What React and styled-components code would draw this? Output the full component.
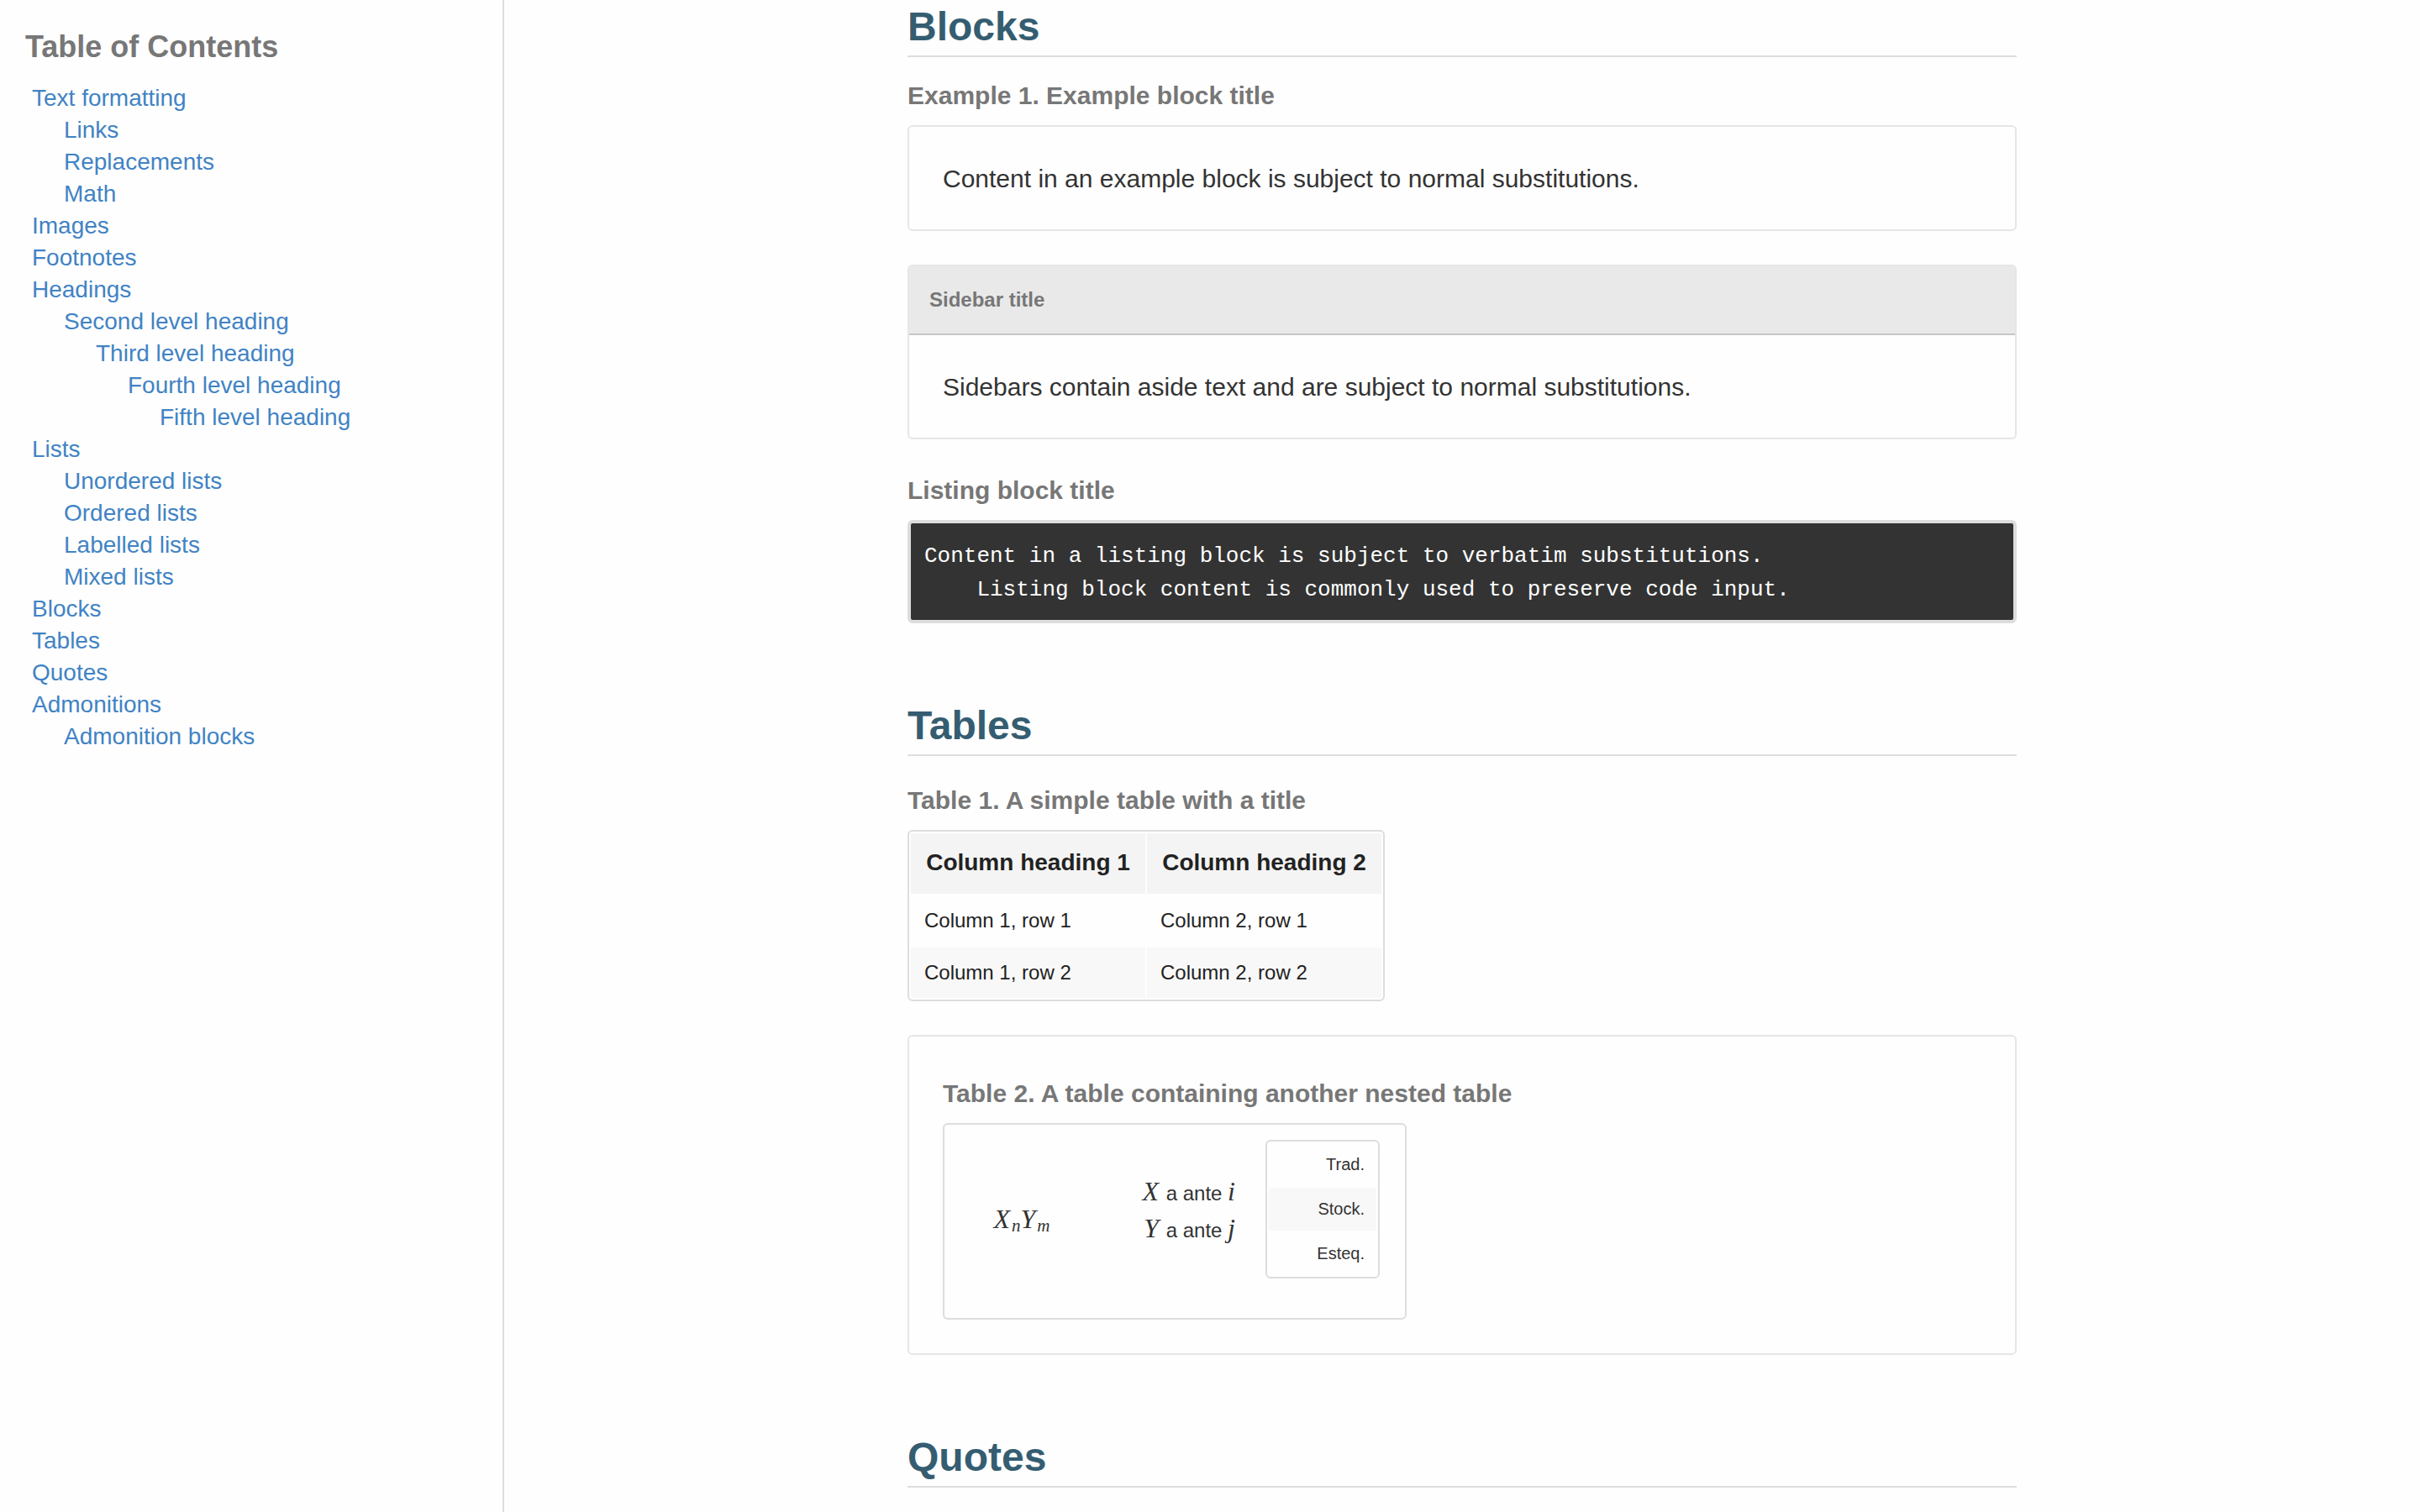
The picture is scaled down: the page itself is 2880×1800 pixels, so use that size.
import React from "react";
import styled, { createGlobalStyle } from "styled-components";

const sans = '"Liberation Sans", Arial, Helvetica, sans-serif';
const serif = '"Liberation Serif", "Times New Roman", serif';
const mono = '"Liberation Mono", "Courier New", monospace';

const GlobalStyle = createGlobalStyle`
  *, *::before, *::after { box-sizing: border-box; }
  body {
    margin: 0;
    background: #fefefe;
    color: #333;
    font-family: ${sans};
    font-size: 30px;
    line-height: 44px;
  }
`;

const Page = styled.div`
  display: grid;
  grid-template-columns: 600px minmax(0, 1fr);
  height: 100vh;
  overflow: hidden;
`;

const Sidebar = styled.nav`
  padding: 34px 30px 30px;
  border-right: 2px solid #ddd;
`;

const TocTitle = styled.h2`
  margin: 0 0 20px;
  color: #777;
  font-size: 36px;
  line-height: 44px;
`;

const TocList = styled.ul`
  margin: 0;
  padding: 0 0 0 ${(p) => (p.$root ? 8 : 38)}px;
  list-style: none;
  font-size: 28px;
  line-height: 38px;
`;

const TocLink = styled.a`
  color: #4183c4;
  text-decoration: none;
`;

const Main = styled.main`
  overflow: hidden;
  padding: 4px 40px 0;
`;

const Content = styled.div`
  max-width: 1320px;
  margin: 0 auto;
`;

const Section = styled.section`
  margin-bottom: 94px;
`;

const Heading = styled.h2`
  margin: 0 0 25px;
  padding-bottom: 6px;
  border-bottom: 2px solid #ddd;
  color: #355d71;
  font-size: 48px;
  line-height: 56px;
`;

const Stack = styled.div`
  display: flex;
  flex-direction: column;
  gap: 40px;
`;

const Figure = styled.figure`
  margin: 0;
  padding-top: ${(p) => (p.$spaced ? 7 : 0)}px;
`;

const Title = styled.figcaption`
  margin-bottom: 14px;
  color: #777;
  font-size: 30px;
  font-weight: bold;
  line-height: 42px;
`;

const Box = styled.div`
  border: 2px solid #e6e6e6;
  border-radius: 6px;
  overflow: hidden;
`;

const BoxBody = styled.div`
  padding: 40px 40px ${(p) => (p.$text ? 38 : 40)}px;
`;

const Paragraph = styled.p`
  margin: 0;
`;

const BoxTitle = styled.div`
  padding: 20px 24px;
  border-bottom: 2px solid #c6c6c6;
  background: #e9e9e9;
  color: #777;
  font-size: 24px;
  font-weight: bold;
  line-height: 40px;
`;

const Listing = styled.pre`
  margin: 0;
  padding: 19px 16px 16px;
  border: 4px solid #ddd;
  border-radius: 6px;
  background: #333;
  color: #fff;
  font-family: ${mono};
  font-size: 26px;
  line-height: 40px;
`;

const Table = styled.table`
  width: ${(p) => p.$width}px;
  table-layout: fixed;
  border: 2px solid #ddd;
  border-radius: 6px;
  border-spacing: 2px;
  color: #222;
`;

const HeadCell = styled.th`
  padding: 16px 16px 18px;
  background: #f4f4f4;
  font-size: 28px;
  line-height: 38px;
`;

const Cell = styled.td`
  padding: 12px 16px;
  font-size: 24px;
  line-height: 36px;
  tr:nth-child(even) > & {
    background: #f8f8f8;
  }
`;

const FormulaCell = styled.td`
  padding: 16px;
  color: #333;
  font-size: 24px;
  line-height: 44px;
  text-align: ${(p) => p.$align};
  vertical-align: ${(p) => p.$valign || "middle"};
`;

const Lines = styled.p`
  margin: 0 0 22px;
`;

const NestedTable = styled.table`
  width: 136px;
  margin-bottom: 29px;
  border: 2px solid #ddd;
  border-radius: 6px;
  border-spacing: 2px;
`;

const NestedCell = styled.td`
  padding: 10px 14px;
  color: #333;
  font-size: 20px;
  line-height: 31px;
  text-align: right;
  tr:nth-child(even) > & {
    background: #f8f8f8;
  }
`;

const Var = styled.i`
  padding-right: 2px;
  font-family: ${serif};
  font-size: 32px;
  line-height: 1;
`;

const Sub = styled.sub`
  font-family: ${serif};
  font-size: 21px;
  font-style: italic;
  line-height: 1;
  vertical-align: -4px;
`;

const toc = [
  { label: "Text formatting", children: [{ label: "Links" }, { label: "Replacements" }, { label: "Math" }] },
  { label: "Images" },
  { label: "Footnotes" },
  {
    label: "Headings",
    children: [
      {
        label: "Second level heading",
        children: [
          {
            label: "Third level heading",
            children: [{ label: "Fourth level heading", children: [{ label: "Fifth level heading" }] }],
          },
        ],
      },
    ],
  },
  {
    label: "Lists",
    children: [
      { label: "Unordered lists" },
      { label: "Ordered lists" },
      { label: "Labelled lists" },
      { label: "Mixed lists" },
    ],
  },
  { label: "Blocks" },
  { label: "Tables" },
  { label: "Quotes" },
  { label: "Admonitions", children: [{ label: "Admonition blocks" }] },
];

const slug = (label) => label.toLowerCase().replace(/ /g, "-");

function Toc({ items, root }) {
  return (
    <TocList $root={root}>
      {items.map((item) => (
        <li key={item.label}>
          <TocLink href={`#${slug(item.label)}`}>{item.label}</TocLink>
          {item.children && <Toc items={item.children} />}
        </li>
      ))}
    </TocList>
  );
}

const listing = `Content in a listing block is subject to verbatim substitutions.
    Listing block content is commonly used to preserve code input.`;

export default function App() {
  return (
    <>
      <GlobalStyle />
      <Page>
        <Sidebar>
          <TocTitle>Table of Contents</TocTitle>
          <Toc items={toc} root />
        </Sidebar>
        <Main>
          <Content>
            <Section>
              <Heading id="blocks">Blocks</Heading>
              <Stack>
                <Figure>
                  <Title>Example 1. Example block title</Title>
                  <Box>
                    <BoxBody $text>
                      <Paragraph>Content in an example block is subject to normal substitutions.</Paragraph>
                    </BoxBody>
                  </Box>
                </Figure>
                <Box>
                  <BoxTitle>Sidebar title</BoxTitle>
                  <BoxBody $text>
                    <Paragraph>Sidebars contain aside text and are subject to normal substitutions.</Paragraph>
                  </BoxBody>
                </Box>
                <Figure>
                  <Title>Listing block title</Title>
                  <Listing>{listing}</Listing>
                </Figure>
              </Stack>
            </Section>
            <Section>
              <Heading id="tables">Tables</Heading>
              <Stack>
                <Figure $spaced>
                  <Title id="table-1">Table 1. A simple table with a title</Title>
                  <Table $width={568} aria-labelledby="table-1">
                    <thead>
                      <tr>
                        <HeadCell>Column heading 1</HeadCell>
                        <HeadCell>Column heading 2</HeadCell>
                      </tr>
                    </thead>
                    <tbody>
                      {[1, 2].map((row) => (
                        <tr key={row}>
                          <Cell>{`Column 1, row ${row}`}</Cell>
                          <Cell>{`Column 2, row ${row}`}</Cell>
                        </tr>
                      ))}
                    </tbody>
                  </Table>
                </Figure>
                <Box>
                  <BoxBody>
                    <Figure $spaced>
                      <Title id="table-2">Table 2. A table containing another nested table</Title>
                      <Table $width={552} aria-labelledby="table-2">
                        <tbody>
                          <tr>
                            <FormulaCell $align="center">
                              <Var>X</Var>
                              <Sub>n</Sub>
                              <Var>Y</Var>
                              <Sub>m</Sub>
                            </FormulaCell>
                            <FormulaCell $align="right">
                              <Lines>
                                <Var>X</Var> a ante <Var>i</Var>
                                <br />
                                <Var>Y</Var> a ante <Var>j</Var>
                              </Lines>
                            </FormulaCell>
                            <FormulaCell $align="left" $valign="top">
                              <NestedTable>
                                <tbody>
                                  {["Trad.", "Stock.", "Esteq."].map((name) => (
                                    <tr key={name}>
                                      <NestedCell>{name}</NestedCell>
                                    </tr>
                                  ))}
                                </tbody>
                              </NestedTable>
                            </FormulaCell>
                          </tr>
                        </tbody>
                      </Table>
                    </Figure>
                  </BoxBody>
                </Box>
              </Stack>
            </Section>
            <Section>
              <Heading id="quotes">Quotes</Heading>
            </Section>
          </Content>
        </Main>
      </Page>
    </>
  );
}
